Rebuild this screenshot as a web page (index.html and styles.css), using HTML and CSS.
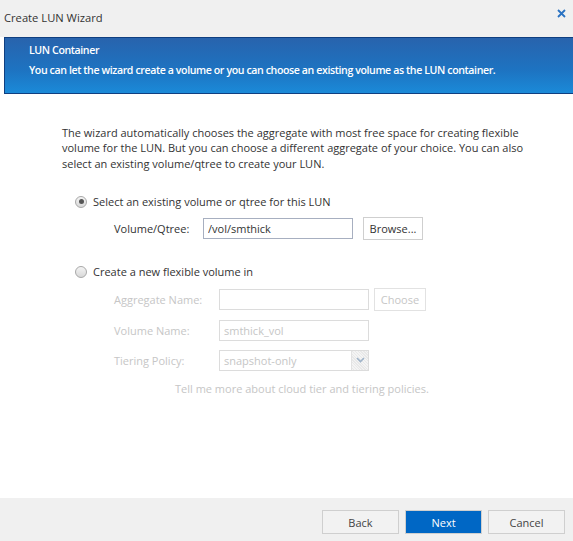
FILE: index.html
```html
<!DOCTYPE html>
<html lang="en">
<head>
  <meta charset="UTF-8">
  <title>Create LUN Wizard</title>
  <link rel="stylesheet" href="styles.css">
</head>
<body>

  <div class="dialog">
    <div class="titlebar">
      <span class="title">Create LUN Wizard</span>
      <span class="close">
        <svg width="9" height="9" viewBox="0 0 9 9"><path d="M1 1 L8 8 M8 1 L1 8" stroke="#2a72c2" stroke-width="1.8" fill="none"/></svg>
      </span>
    </div>

    <div class="banner">
      <div class="banner-title">LUN Container</div>
      <div class="banner-text">You can let the wizard create a volume or you can choose an existing volume as the LUN container.</div>
    </div>

    <div class="content">
      <p class="intro">The wizard automatically chooses the aggregate with most free space for creating flexible volume for the LUN. But you can choose a different aggregate of your choice. You can also select an existing volume/qtree to create your LUN.</p>

      <div class="option">
        <span class="radio checked"></span>
        <span>Select an existing volume or qtree for this LUN</span>
      </div>
      <div class="fields existing">
        <label>Volume/Qtree:</label>
        <div class="field-row">
          <input type="text" class="text-input" value="/vol/smthick">
          <button class="btn small">Browse...</button>
        </div>
      </div>

      <div class="option second">
        <span class="radio"></span>
        <span>Create a new flexible volume in</span>
      </div>
      <div class="fields disabled">
        <label>Aggregate Name:</label>
        <div class="field-row">
          <input type="text" class="text-input" value="" disabled>
          <button class="btn small" disabled>Choose</button>
        </div>
        <label>Volume Name:</label>
        <div class="field-row">
          <input type="text" class="text-input" value="smthick_vol" disabled>
        </div>
        <label>Tiering Policy:</label>
        <div class="field-row">
          <div class="select">
            <span>snapshot-only</span>
            <span class="arrow">
              <svg width="9" height="6" viewBox="0 0 9 6"><path d="M1 1 L4.5 4.5 L8 1" stroke="#9fb3c8" stroke-width="1.6" fill="none"/></svg>
            </span>
          </div>
        </div>
      </div>
      <div class="more">Tell me more about cloud tier and tiering policies.</div>
    </div>

    <div class="footer">
      <button class="btn">Back</button>
      <button class="btn primary">Next</button>
      <button class="btn">Cancel</button>
    </div>
  </div>

</body>
</html>
```

FILE: styles.css
```css
body {
  margin: 0;
  font-family: "Open Sans", Arial, sans-serif;
  font-size: 11px;
  color: #333;
  background: #fff;
}

.dialog {
  width: 573px;
  height: 541px;
  display: flex;
  flex-direction: column;
}

.titlebar {
  height: 37px;
  background: #f0f0f0;
  display: flex;
  justify-content: space-between;
  align-items: center;
  padding: 0 7px 0 4px;
  box-sizing: border-box;
}

.title {
  font-size: 11.2px;
  color: #333;
  margin-top: -2px;
}

.close {
  display: flex;
  margin-top: -10px;
}

.banner {
  margin-left: 4px;
  height: 57px;
  box-sizing: border-box;
  border: 1px solid #103f80;
  border-right: none;
  background: linear-gradient(#2863ad, #1d74c2 60%, #1b8ad8);
  color: #fff;
  padding: 3px 0 0 24px;
  font-weight: 600;
  font-size: 10.6px;
  letter-spacing: -0.4px;
  line-height: 19.5px;
  white-space: nowrap;
}

.content {
  flex: 1;
  padding: 31px 40px 0 62px;
}

.intro {
  margin: 0;
  line-height: 15.3px;
  width: 462px;
}

.option {
  display: flex;
  align-items: center;
  gap: 6px;
  margin: 23px 0 0 13px;
  height: 16px;
}

.option.second {
  margin-top: 24px;
}

.radio {
  width: 10px;
  height: 10px;
  border: 1px solid #a8a8a8;
  border-radius: 50%;
  background: linear-gradient(#f4f4f4, #d8d8d8);
  display: flex;
  align-items: center;
  justify-content: center;
}

.radio.checked::after {
  content: "";
  width: 5px;
  height: 5px;
  border-radius: 50%;
  background: #555;
}

.fields {
  display: grid;
  grid-template-columns: 105px auto;
  row-gap: 9px;
  align-items: center;
  margin: 11px 0 0 52px;
}

.fields.existing {
  grid-template-columns: 89px auto;
  margin-top: 7px;
}

.fields.disabled {
  margin-top: 8px;
  color: #c6c6c6;
}

.field-row {
  display: flex;
  align-items: center;
  gap: 10px;
}

.fields.disabled .field-row {
  gap: 5px;
}

.text-input {
  width: 150px;
  height: 21px;
  box-sizing: border-box;
  border: 1px solid #a7afc0;
  padding: 0 4px;
  font-family: inherit;
  font-size: 11px;
  color: #333;
  background: #fff;
}

.text-input:disabled {
  border-color: #dcdcdc;
  color: #c6c6c6;
}

.btn {
  width: 77px;
  height: 24px;
  border: 1px solid #cfcfcf;
  background: #f2f2f2;
  font-family: inherit;
  font-size: 11px;
  color: #444;
  padding: 0;
}

.btn.small {
  width: 60px;
  height: 23px;
  background: #fff;
  color: #333;
}

.btn.small:disabled {
  width: 52px;
  border-color: #e2e2e2;
  color: #c6c6c6;
}

.select {
  width: 150px;
  height: 21px;
  box-sizing: border-box;
  border: 1px solid #dcdcdc;
  display: flex;
  align-items: center;
  justify-content: space-between;
  padding-left: 4px;
}

.arrow {
  width: 16px;
  height: 19px;
  border-left: 1px solid #e2e2e2;
  background: repeating-linear-gradient(45deg, #f4f4f4 0 1px, #e8e8e8 1px 2px);
  display: flex;
  align-items: center;
  justify-content: center;
}

.more {
  margin: 10px 0 0 113px;
  color: #c6c6c6;
}

.footer {
  height: 43px;
  background: #f0f0f0;
  display: flex;
  justify-content: flex-end;
  align-items: flex-start;
  gap: 6px;
  padding: 12px 8px 0 0;
  box-sizing: border-box;
}

.btn.primary {
  background: #0067c5;
  border-color: #cfcfcf;
  color: #fff;
}
```
